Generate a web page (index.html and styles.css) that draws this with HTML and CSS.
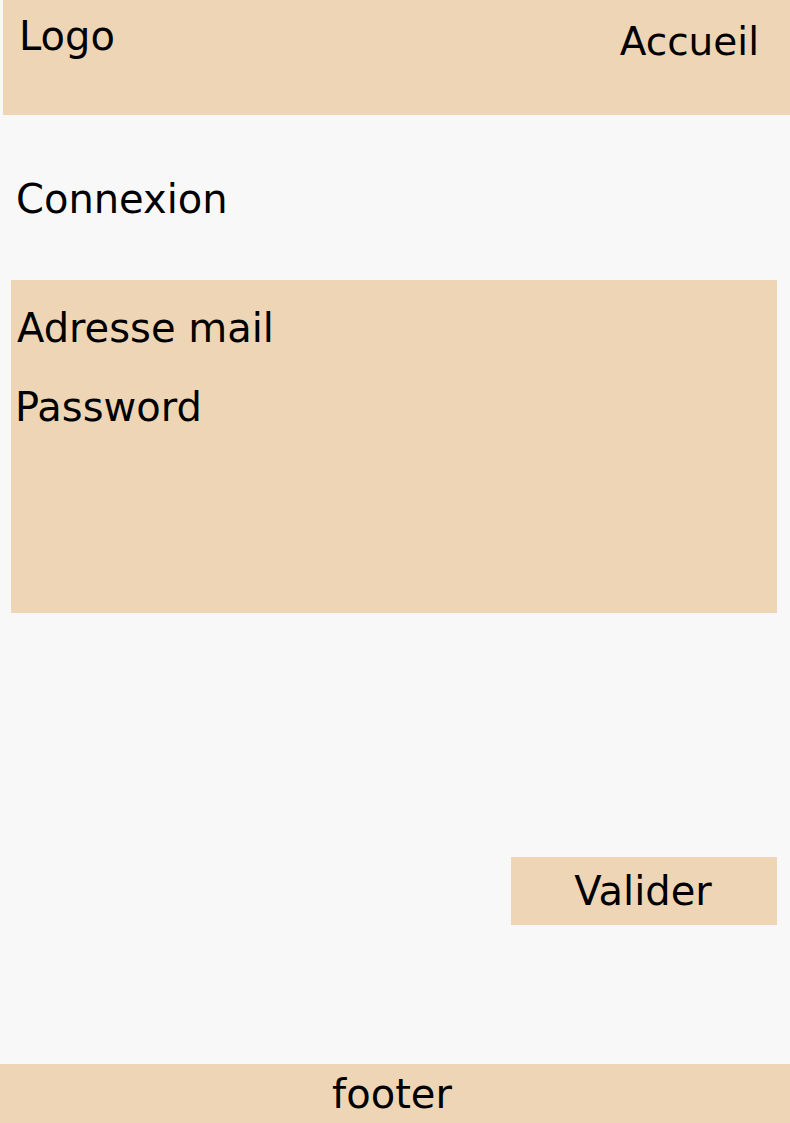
FILE: index.html
```html
<!DOCTYPE html>
<html lang="fr">
<head>
<meta charset="utf-8">
<title>Connexion</title>
<link rel="stylesheet" href="styles.css">
</head>
<body>
<div class="page">
  <header class="site-header">
    <div class="logo">Logo</div>
    <nav class="nav"><a class="nav-link" href="#">Accueil</a></nav>
  </header>
  <main class="content">
    <h1 class="title">Connexion</h1>
    <form class="login-form">
      <label class="field-label field-mail">Adresse mail</label>
      <label class="field-label">Password</label>
    </form>
    <div class="actions">
      <button type="button" class="btn-submit">Valider</button>
    </div>
  </main>
  <footer class="site-footer">footer</footer>
</div>
</body>
</html>
```

FILE: styles.css
```css
* { box-sizing: border-box; }
html, body {
  margin: 0;
  padding: 0;
  background: #f8f8f8;
}
body {
  font-family: "DejaVu Sans", Verdana, sans-serif;
  font-size: 40px;
  line-height: normal;
  color: #000;
}
.page {
  min-height: 1123px;
  display: flex;
  flex-direction: column;
}
.site-header {
  margin-left: 3px;
  height: 115px;
  background: #eed5b5;
  display: flex;
  justify-content: space-between;
  align-items: flex-start;
  padding: 13px 31px 0 16px;
}
.nav { padding-top: 5px; }
.nav-link {
  color: #000;
  text-decoration: none;
  font-size: 39px;
}
.content {
  display: flex;
  flex-direction: column;
  padding: 0 13px 0 11px;
}
.title {
  margin: 61px 0 0 5px;
  font-size: 40px;
  font-weight: normal;
}
.login-form {
  margin-top: 58px;
  height: 333px;
  background: #eed5b5;
  display: flex;
  flex-direction: column;
  gap: 33px;
  padding: 25px 0 0 4px;
}
.field-label { display: block; }
.field-mail { padding-left: 2px; }
.actions {
  display: flex;
  justify-content: flex-end;
  margin-top: 244px;
}
.btn-submit {
  width: 266px;
  height: 68px;
  border: none;
  background: #eed5b5;
  font-family: inherit;
  font-size: 40px;
  color: #000;
  padding: 0 2px 0 0;
  display: flex;
  align-items: center;
  justify-content: center;
}
.site-footer {
  margin-top: auto;
  height: 59px;
  background: #eed5b5;
  display: flex;
  align-items: center;
  justify-content: center;
  padding-right: 6px;
}
```
